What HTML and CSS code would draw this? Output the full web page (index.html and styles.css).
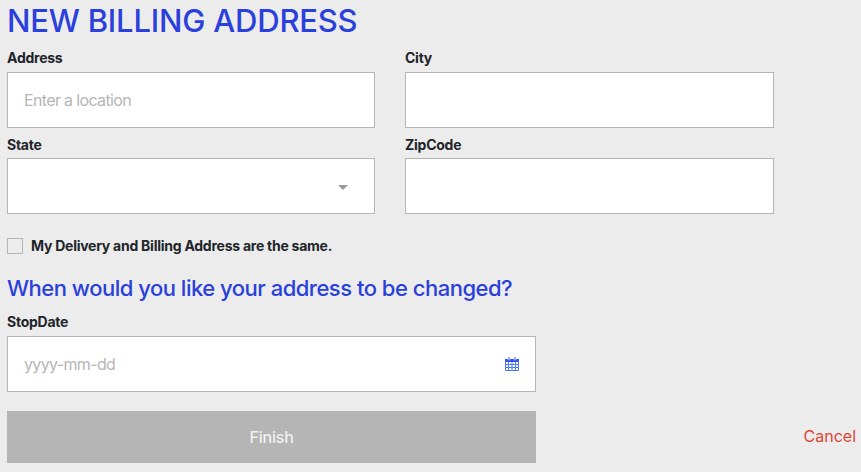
FILE: index.html
```
<!DOCTYPE html>
<html lang="en">
<head>
    <meta charset="UTF-8">
    <meta name="viewport" content="width=device-width, initial-scale=1.0">
    <title>New Billing Address</title>
    <link rel="stylesheet" href="styles.css">
</head>
<body>
    <form class="billing-form">
        <h1>NEW BILLING ADDRESS</h1>
        <div class="fields">
            <div class="field">
                <label for="address">Address</label>
                <input type="text" id="address" placeholder="Enter a location">
            </div>
            <div class="field">
                <label for="city">City</label>
                <input type="text" id="city">
            </div>
            <div class="field second-row">
                <label for="state">State</label>
                <div class="select-box">
                    <select id="state">
                        <option value=""></option>
                    </select>
                    <svg class="arrow" width="10" height="5" viewBox="0 0 10 5"><path d="M0 0h10L5 5z"/></svg>
                </div>
            </div>
            <div class="field second-row">
                <label for="zip">ZipCode</label>
                <input type="text" id="zip">
            </div>
        </div>
        <div class="same-address">
            <input type="checkbox" id="same">
            <label for="same">My Delivery and Billing Address are the same.</label>
        </div>
        <h2>When would you like your address to be changed?</h2>
        <div class="field date-field">
            <label for="stopdate">StopDate</label>
            <div class="date-box">
                <input type="text" id="stopdate" placeholder="yyyy-mm-dd">
                <svg class="calendar" width="14" height="14" viewBox="0 0 14 14">
                    <path class="fill" d="M0 2h14v3H0z"/>
                    <path class="grid" d="M.5 4.500v9h13v-9M3.500 5v8.500M7 5v8.500M10.500 5v8.500M.5 7.500h13M.5 10.500h13"/>
                    <path class="ring" d="M3 0h2v3H3zM9 0h2v3H9z"/>
                </svg>
            </div>
        </div>
        <div class="actions">
            <button type="submit" class="finish" disabled>Finish</button>
            <a class="cancel">Cancel</a>
        </div>
    </form>
</body>
</html>
```
FILE: styles.css
```
* {
    box-sizing: border-box;
}
body {
    margin: 0;
    background-color: #ececec;
    color: #212529;
    font-family: Inter, "Liberation Sans", sans-serif;
}
.billing-form {
    padding: 0 5px 0 7px;
}
h1, h2 {
    margin: 0;
    color: #2940dc;
    font-weight: 500;
    white-space: nowrap;
}
h1 {
    height: 42px;
    font-size: 31px;
    line-height: 41px;
    letter-spacing: -0.2px;
}
h2 {
    margin-top: 18px;
    font-size: 22px;
    line-height: 32px;
    letter-spacing: -0.5px;
}
.fields {
    display: grid;
    grid-template-columns: 368px 369px;
    column-gap: 30px;
}
label {
    display: block;
    height: 30px;
    padding-top: 6px;
    font-size: 14px;
    font-weight: 700;
    line-height: 20px;
    letter-spacing: -0.25px;
}
.second-row label {
    padding-top: 7px;
}
input[type="text"], select {
    display: block;
    width: 100%;
    height: 56px;
    padding: 0 16px;
    border: 1px solid #b5b5b5;
    border-radius: 0;
    background-color: white;
    font-family: inherit;
    font-size: 16px;
    letter-spacing: -0.65px;
}
input::placeholder {
    color: #b5b5b5;
    opacity: 1;
}
select {
    appearance: none;
}
.select-box, .date-box {
    position: relative;
}
.arrow {
    position: absolute;
    top: 27px;
    right: 27px;
    fill: #999999;
}
.same-address {
    display: flex;
    align-items: center;
    height: 16px;
    margin-top: 24px;
}
.same-address input {
    appearance: none;
    width: 16px;
    height: 16px;
    margin: 0 8px 0 0;
    border: 1px solid #b5b5b5;
}
.same-address label {
    height: auto;
    padding: 0;
    white-space: nowrap;
}
.date-field {
    width: 529px;
    margin-top: 2px;
}
.calendar {
    position: absolute;
    top: 21px;
    right: 17px;
}
.calendar .fill {
    fill: #2f50f0;
}
.calendar .grid {
    fill: none;
    stroke: #4d76f5;
}
.calendar .ring {
    fill: #6d96f5;
    stroke: white;
    stroke-width: 0.3;
}
.actions {
    display: flex;
    align-items: center;
    justify-content: space-between;
    margin-top: 19px;
}
.finish {
    width: 529px;
    height: 52px;
    padding: 0;
    border: 0;
    background-color: #b5b5b5;
    color: #f0f0f0;
    font-family: inherit;
    font-size: 16px;
    font-weight: 500;
    letter-spacing: -0.2px;
}
.cancel {
    padding-bottom: 2px;
    color: #dc4437;
    font-size: 16px;
}
```
